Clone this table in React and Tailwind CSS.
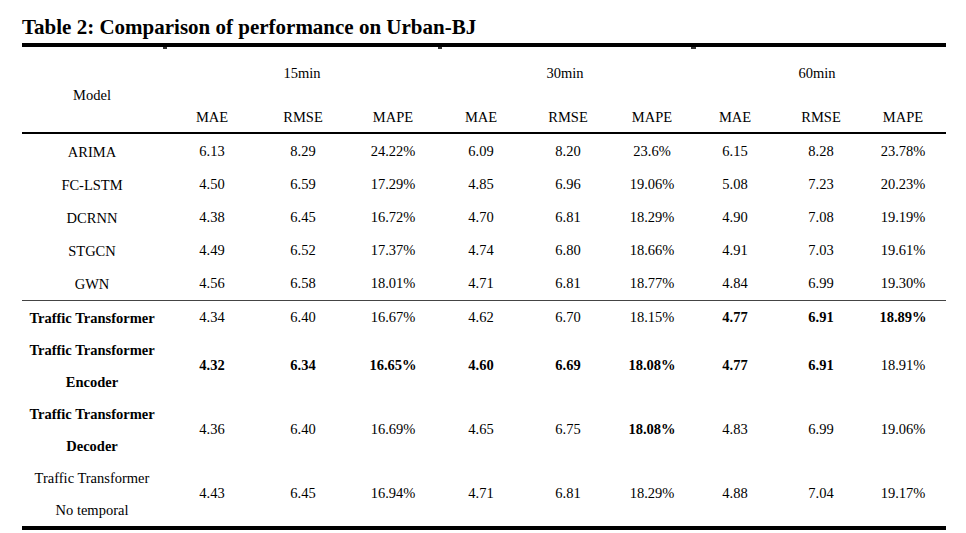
import React from "react";

const COLS = "grid grid-cols-[140px_100px_82px_98px_78px_96px_72px_94px_78px_86px]";

const rows = [
  { name: ["ARIMA"], v: ["6.13", "8.29", "24.22%", "6.09", "8.20", "23.6%", "6.15", "8.28", "23.78%"], b: [], nb: false, h: "h-[33px]" },
  { name: ["FC-LSTM"], v: ["4.50", "6.59", "17.29%", "4.85", "6.96", "19.06%", "5.08", "7.23", "20.23%"], b: [], nb: false, h: "h-[33px]" },
  { name: ["DCRNN"], v: ["4.38", "6.45", "16.72%", "4.70", "6.81", "18.29%", "4.90", "7.08", "19.19%"], b: [], nb: false, h: "h-[33px]" },
  { name: ["STGCN"], v: ["4.49", "6.52", "17.37%", "4.74", "6.80", "18.66%", "4.91", "7.03", "19.61%"], b: [], nb: false, h: "h-[33px]" },
  { name: ["GWN"], v: ["4.56", "6.58", "18.01%", "4.71", "6.81", "18.77%", "4.84", "6.99", "19.30%"], b: [], nb: false, h: "h-[33px]" },
];

const rows2 = [
  { name: ["Traffic Transformer"], v: ["4.34", "6.40", "16.67%", "4.62", "6.70", "18.15%", "4.77", "6.91", "18.89%"], b: [6, 7, 8], nb: true, h: "h-[33px]" },
  { name: ["Traffic Transformer", "Encoder"], v: ["4.32", "6.34", "16.65%", "4.60", "6.69", "18.08%", "4.77", "6.91", "18.91%"], b: [0, 1, 2, 3, 4, 5, 6, 7], nb: true, h: "h-[64px]" },
  { name: ["Traffic Transformer", "Decoder"], v: ["4.36", "6.40", "16.69%", "4.65", "6.75", "18.08%", "4.83", "6.99", "19.06%"], b: [5], nb: true, h: "h-[64px]" },
  { name: ["Traffic Transformer", "No temporal"], v: ["4.43", "6.45", "16.94%", "4.71", "6.81", "18.29%", "4.88", "7.04", "19.17%"], b: [], nb: false, h: "h-[64px]" },
];

function Row({ r }) {
  return (
    <div className={`${COLS} ${r.h}`}>
      <div className={`flex flex-col items-center justify-center leading-[32px] ${r.nb ? "font-bold" : ""}`}>
        {r.name.map((n, i) => (
          <span key={i}>{n}</span>
        ))}
      </div>
      {r.v.map((x, i) => (
        <div key={i} className={`flex items-center justify-center ${r.b.includes(i) ? "font-bold" : ""}`}>
          {x}
        </div>
      ))}
    </div>
  );
}

export default function App() {
  const sub = ["MAE", "RMSE", "MAPE", "MAE", "RMSE", "MAPE", "MAE", "RMSE", "MAPE"];
  return (
    <div className="w-[966px] h-[533px] bg-white text-black font-['Liberation_Serif',serif] pl-[22px] overflow-hidden">
      <div className="pt-[15px] text-[21px] leading-[24px] font-bold whitespace-nowrap">
        Table 2: Comparison of performance on Urban-BJ
      </div>
      <div className="w-[924px] mt-[4px] border-t-4 border-black text-[14.5px]">
        <div className={`${COLS} grid-rows-[52px_33px] relative border-b-2 border-black`}>
          <span className="absolute top-0 left-[141px] w-[4px] h-[2px] bg-[#333]" />
          <span className="absolute top-0 left-[416px] w-[4px] h-[2px] bg-[#333]" />
          <span className="absolute top-0 left-[669px] w-[5px] h-[2px] bg-[#333]" />
          <div className="row-span-2 flex items-center justify-center pt-[12px]">Model</div>
          <div className="col-span-3 flex items-center justify-center pt-[2px]">15min</div>
          <div className="col-span-3 flex items-center justify-center pt-[2px]">30min</div>
          <div className="col-span-3 flex items-center justify-center pt-[2px]">60min</div>
          {sub.map((s, i) => (
            <div key={i} className="flex items-center justify-center pt-[5px]">
              {s}
            </div>
          ))}
        </div>
        <div className="pt-[1px] border-b border-[#444]">
          {rows.map((r, i) => (
            <Row key={i} r={r} />
          ))}
        </div>
        <div className="border-b-4 border-black">
          {rows2.map((r, i) => (
            <Row key={i} r={r} />
          ))}
        </div>
      </div>
    </div>
  );
}
